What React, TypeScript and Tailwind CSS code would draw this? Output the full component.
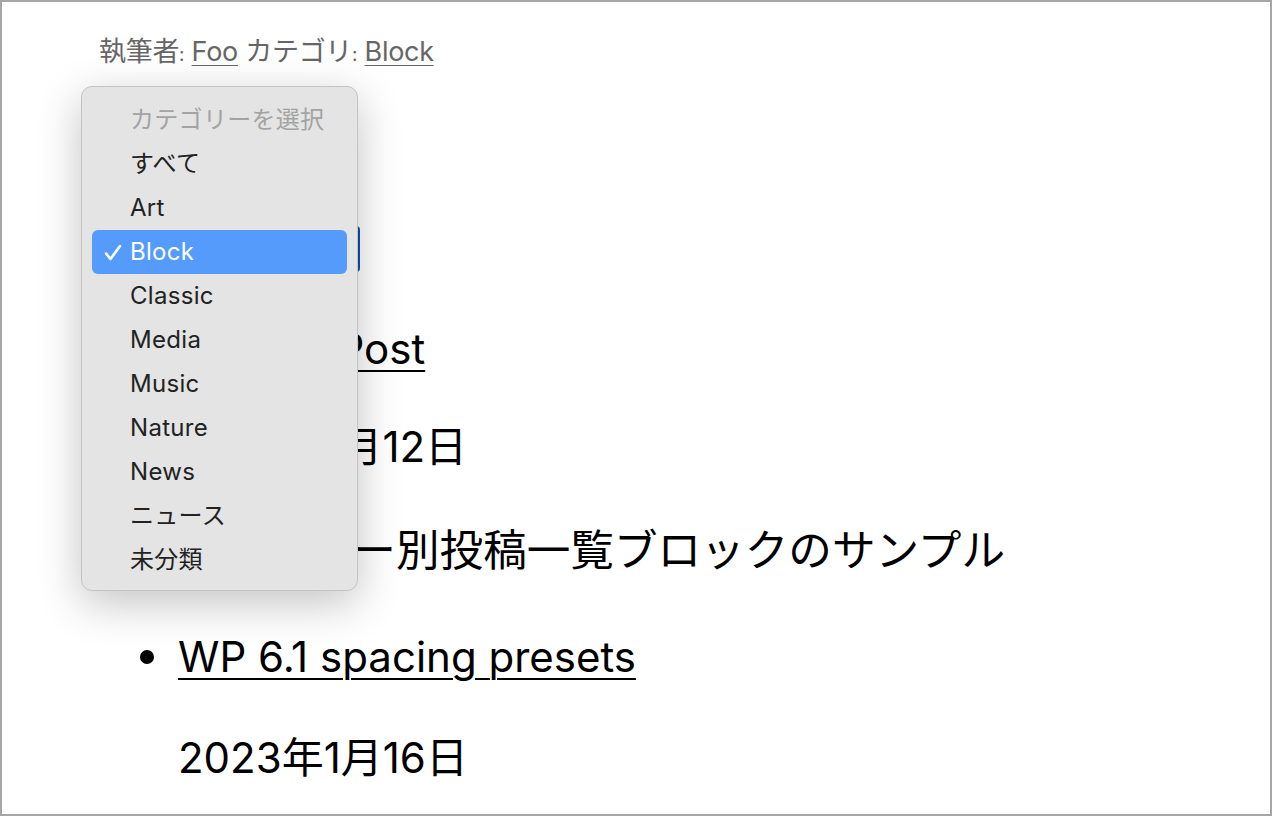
import React from "react";

// categories shown in the native select popup
const categories = [
  "すべて",
  "Art",
  "Block",
  "Classic",
  "Media",
  "Music",
  "Nature",
  "News",
  "ニュース",
  "未分類",
];

const sans = "font-['Inter','Noto_Sans_CJK_JP',sans-serif]";

export default function App() {
  return (
    <div className="relative h-screen overflow-hidden border-2 border-[#a6a6a6] bg-white">
      <main className={`${sans} pl-[97px] pt-[35px] text-black`}>
        {/* post meta */}
        <div className="text-[27px] leading-[30px] tracking-[-0.3px] text-[#666666]">
          執筆者<span className="text-[19px]">:</span>{" "}
          <a className="underline underline-offset-[4px] decoration-1">Foo</a> カテゴリ
          <span className="text-[19px]">:</span>{" "}
          <a className="underline underline-offset-[4px] decoration-1">Block</a>
        </div>

        {/* category select (covered by its popup) */}
        <div className="mt-[156px] h-[46px] w-[261px] rounded-sm border-[3px] border-[#0b4fb0] bg-white" />

        {/* post list */}
        <ul className="ml-[79px] text-[42px]">
          <li className="mt-[47px] h-[60px] leading-[60px]">
            <a className="underline decoration-2 underline-offset-[6px]">Sample Post</a>
          </li>
          <li className="mt-[38px] h-[60px] leading-[60px]">2022年1月12日</li>
          <li className="mt-[44px] h-[60px] leading-[60px] text-[43.6px]">
            カテゴリー別投稿一覧ブロックのサンプル
          </li>
          <li className="relative mt-[46px] h-[60px] leading-[60px]">
            <span className="absolute left-[-38px] top-[23px] h-[14px] w-[14px] rounded-full bg-black" />
            <a className="underline decoration-2 underline-offset-[6px]">WP 6.1 spacing presets</a>
          </li>
          <li className="mt-[41px] h-[60px] leading-[60px]">2023年1月16日</li>
        </ul>
      </main>

      {/* native select popup */}
      <div
        className={`${sans} absolute left-[79px] top-[84px] w-[277px] rounded-[11px] border border-[#c4c4c4] bg-[#e4e4e4] px-[10px] pt-[11px] pb-[8px] text-[24px] tracking-[0.3px] text-[#222222] shadow-[0_12px_44px_rgba(0,0,0,0.24)]`}
      >
        <div className="flex h-[44px] items-center pl-[38px] text-[#a3a3a3]">カテゴリーを選択</div>
        {categories.map((c) => {
          const selected = c === "Block";
          return (
            <div
              key={c}
              className={`relative flex h-[44px] items-center rounded-[6px] pl-[38px] ${
                selected ? "bg-[#559bfb] text-white" : ""
              }`}
            >
              {selected && (
                <svg
                  className="absolute left-[12px] top-[14px]"
                  width="18"
                  height="17"
                  viewBox="0 0 18 17"
                  fill="none"
                  stroke="white"
                  strokeWidth="2.6"
                  strokeLinecap="round"
                  strokeLinejoin="round"
                >
                  <path d="M2 9.5 L6.5 15 L16 2" />
                </svg>
              )}
              {c}
            </div>
          );
        })}
      </div>
    </div>
  );
}
